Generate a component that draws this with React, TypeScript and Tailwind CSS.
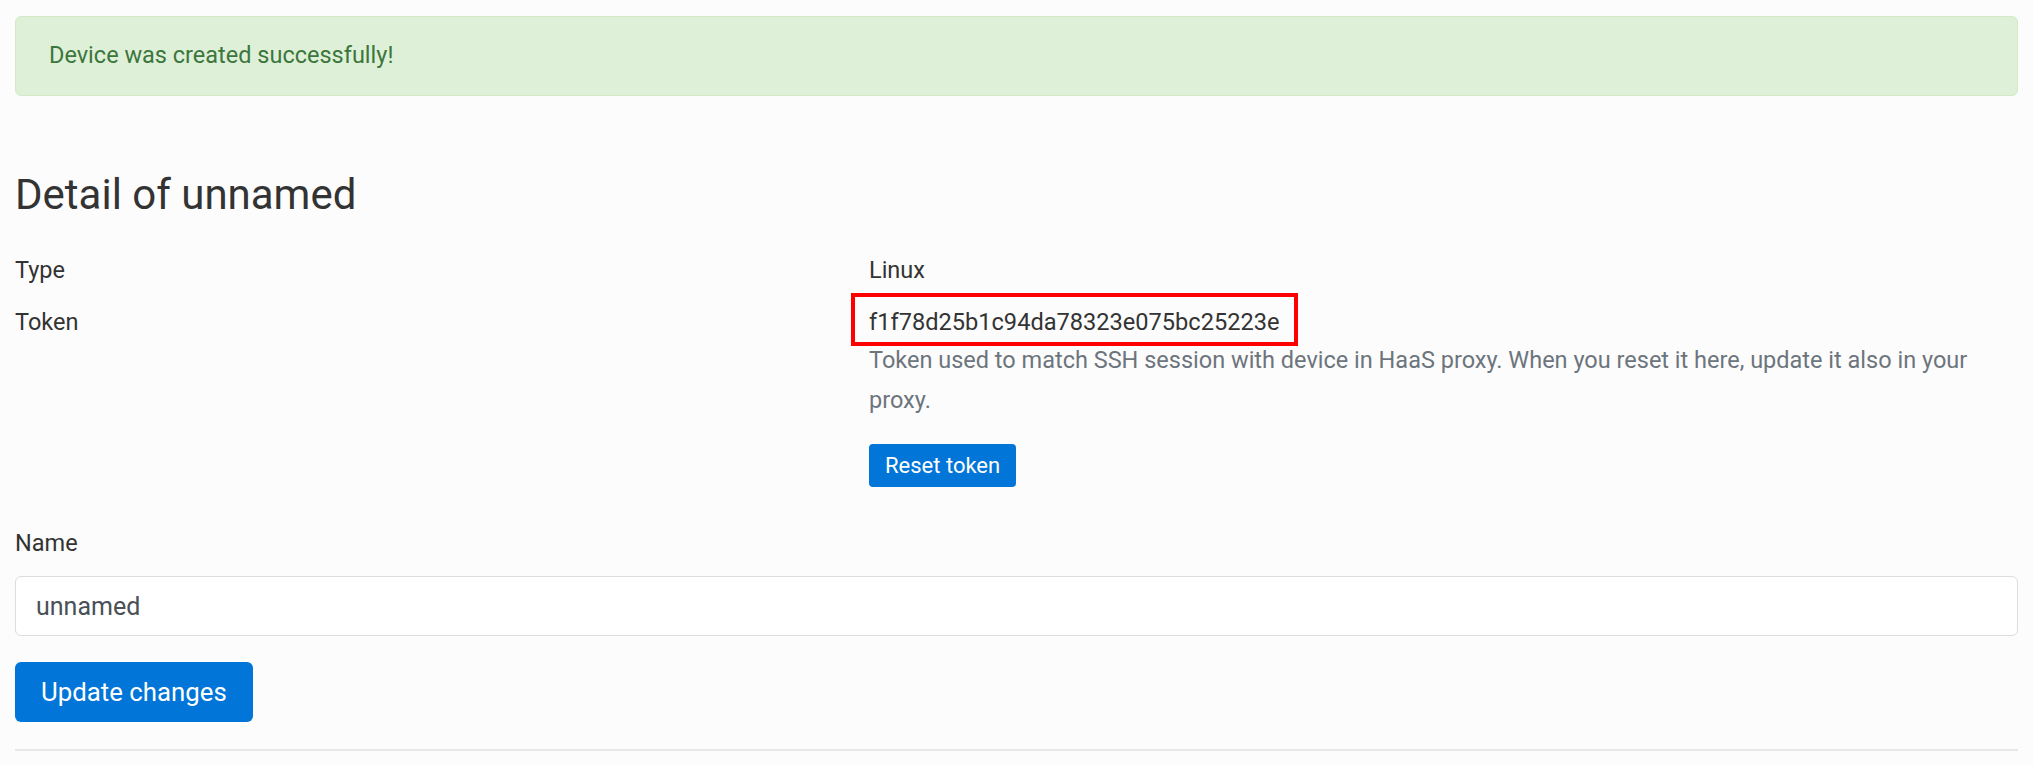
export default function App() {
  return (
    <div className="min-h-screen bg-[#fcfcfc] font-['Roboto',sans-serif] text-[#333]">
      <div className="px-[15px] pt-4 pb-6">
        {/* Flash message */}
        <div className="h-[80px] flex items-center px-[33px] rounded-md border border-[#d6e9c6] bg-[#dff0d8] text-[23.5px] text-[#3c763d]">
          Device was created successfully!
        </div>

        <h1 className="mt-[74px] text-[42px] leading-[50px] font-normal text-[#333]">
          Detail of unnamed
        </h1>

        {/* Device info */}
        <div className="mt-[32px] grid grid-cols-[854px_1fr] gap-y-[16px]">
          <div className="text-[23.5px] leading-[36px]">Type</div>
          <div className="text-[23.5px] leading-[36px]">Linux</div>

          <div className="text-[23.5px] leading-[36px]">Token</div>
          <div>
            <div className="relative inline-block text-[23.6px] leading-[36px] text-[#333]">
              f1f78d25b1c94da78323e075bc25223e
              <span className="absolute -left-[18px] -top-[11px] w-[447px] h-[53px] border-4 border-[#ff0000]" />
            </div>
            <p className="text-[23.5px] leading-[40px] text-[#6c757d]">
              Token used to match SSH session with device in HaaS proxy. When you reset it here, update it also in your
              proxy.
            </p>
            <button className="mt-[24px] h-[43px] px-[16px] rounded-[4px] bg-[#0275d8] text-[22px] text-white">
              Reset token
            </button>
          </div>
        </div>

        {/* Edit form */}
        <label className="mt-[38px] block text-[23.5px] leading-[36px]">Name</label>
        <input
          defaultValue="unnamed"
          className="mt-[15px] block w-full h-[60px] px-[20px] rounded-md border border-[#ddd] bg-white text-[25px] text-[#495057] outline-none"
        />
        <button className="mt-[26px] h-[60px] px-[26px] rounded-md bg-[#0275d8] text-[25.8px] text-white">
          Update changes
        </button>

        <hr className="mt-[27px] border-t-2 border-[#e8e8e8]" />
      </div>
    </div>
  );
}
